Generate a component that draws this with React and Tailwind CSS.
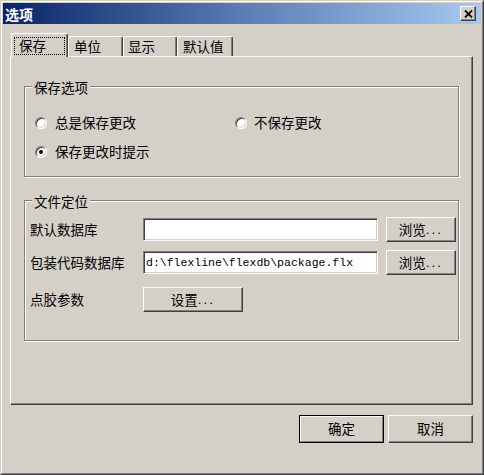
import React from "react";

const raised =
  "bg-[#d4d0c8] border border-t-white border-l-white border-r-[#404040] border-b-[#404040] shadow-[inset_-1px_-1px_0_#808080]";
const sunken =
  "bg-white border border-t-[#808080] border-l-[#808080] border-r-white border-b-white shadow-[inset_1px_1px_0_#404040,inset_-1px_-1px_0_#d4d0c8]";
const etched =
  "relative w-[435px] border border-[#808080] shadow-[inset_1px_1px_0_white,1px_1px_0_white]";

function Radio({ checked }) {
  return (
    <div className="w-[12px] h-[12px] shrink-0 rounded-full bg-white border border-t-[#808080] border-l-[#808080] border-r-white border-b-white shadow-[inset_1px_1px_0_#404040,inset_-1px_-1px_0_#d4d0c8] flex items-center justify-center">
      {checked && <div className="w-[4px] h-[4px] rounded-full bg-black" />}
    </div>
  );
}

function Dots() {
  return <span className="tracking-[2px] font-['Liberation_Sans',sans-serif]">...</span>;
}

function Legend({ children }) {
  return (
    <div className="absolute left-[7px] -top-[8px] px-[2px] bg-[#d4d0c8] leading-[16px]">
      {children}
    </div>
  );
}

export default function App() {
  return (
    <div className="w-[484px] h-[475px] bg-[#d4d0c8] border border-t-[#d4d0c8] border-l-[#d4d0c8] border-r-[#404040] border-b-[#404040] text-black text-[13.5px] font-['Noto_Sans_CJK_SC','Liberation_Sans',sans-serif]">
      <div className="h-full border border-t-white border-l-white border-r-[#808080] border-b-[#808080] p-[1px] flex flex-col">
        {/* Title bar */}
        <div className="h-[21px] shrink-0 flex items-center justify-between pl-[2px] pr-[5px] bg-linear-to-r from-[#0a246a] via-[#5a7db5] to-[#a6caf0]">
          <span className="text-white font-bold text-[14px] leading-none">选项</span>
          <div className={`w-[16px] h-[15px] flex items-center justify-center ${raised}`}>
            <svg width="9" height="8" viewBox="0 0 9 8">
              <path d="M1 0.5 L8 7.5 M8 0.5 L1 7.5" stroke="black" strokeWidth="1.8" />
            </svg>
          </div>
        </div>

        {/* Tabs + panel */}
        <div className="pl-[7px] pt-[9px]">
          <div className="relative z-10 flex items-end h-[23px]">
            <div className="ml-[1px] w-[57px] h-[24px] -mb-[1px] bg-[#d4d0c8] border-t border-l border-r border-t-white border-l-white border-r-[#404040] shadow-[inset_-1px_0_0_#808080] rounded-t-[3px] pl-[2px] pr-[2px] pt-[3px] pb-[2px] flex">
              <div className="flex-1 border border-dotted border-black flex items-center pl-[4px] leading-none">
                保存
              </div>
            </div>
            <div className="w-[55px] h-[20px] border-t border-l border-r border-t-white border-l-white border-r-[#404040] shadow-[inset_-1px_0_0_#808080] rounded-t-[3px] pl-[5px] pt-[1px] flex items-center leading-none">
              单位
            </div>
            <div className="w-[54px] h-[20px] border-t border-l border-r border-t-white border-l-white border-r-[#404040] shadow-[inset_-1px_0_0_#808080] rounded-t-[3px] pl-[4px] pt-[1px] flex items-center leading-none">
              显示
            </div>
            <div className="w-[56px] h-[20px] border-t border-l border-r border-t-white border-l-white border-r-[#404040] shadow-[inset_-1px_0_0_#808080] rounded-t-[3px] pl-[5px] pt-[1px] flex items-center leading-none">
              默认值
            </div>
          </div>

          <div className={`w-[463px] h-[349px] pl-[13px] pt-[29px] ${raised}`}>
            {/* 保存选项 */}
            <div className={`${etched} h-[91px] pt-[28px] pl-[10px]`}>
              <Legend>保存选项</Legend>
              <div className="grid grid-cols-[200px_1fr]">
                <div className="flex items-center h-[16px] gap-[8px]">
                  <Radio />
                  <span className="leading-none">总是保存更改</span>
                </div>
                <div className="flex items-center h-[16px] gap-[7px]">
                  <Radio />
                  <span className="leading-none">不保存更改</span>
                </div>
                <div className="flex items-center h-[16px] gap-[8px] mt-[13px]">
                  <Radio checked />
                  <span className="leading-none">保存更改时提示</span>
                </div>
              </div>
            </div>

            {/* 文件定位 */}
            <div className={`${etched} mt-[23px] h-[141px] pt-[16px] pl-[5px]`}>
              <Legend>文件定位</Legend>
              <div className="flex items-center h-[25px]">
                <span className="w-[113px] leading-none">默认数据库</span>
                <div className={`w-[235px] h-[23px] ${sunken}`} />
                <div className={`ml-[8px] w-[70px] h-[25px] flex items-center justify-center leading-none ${raised}`}>
                  浏览<Dots />
                </div>
              </div>
              <div className="flex items-center h-[25px] mt-[8px]">
                <span className="w-[113px] leading-none">包装代码数据库</span>
                <div className={`w-[235px] h-[23px] flex items-center pl-[2px] font-['Liberation_Mono',monospace] text-[11.5px] leading-none ${sunken}`}>
                  {"d:\\flexline\\flexdb\\package.flx"}
                </div>
                <div className={`ml-[8px] w-[70px] h-[25px] flex items-center justify-center leading-none ${raised}`}>
                  浏览<Dots />
                </div>
              </div>
              <div className="flex items-center h-[25px] mt-[12px]">
                <span className="w-[113px] leading-none">点胶参数</span>
                <div className={`w-[100px] h-[25px] flex items-center justify-center leading-none ${raised}`}>
                  设置<Dots />
                </div>
              </div>
            </div>
          </div>
        </div>

        {/* Bottom buttons */}
        <div className="flex justify-end gap-[4px] mt-[10px] pr-[8px]">
          <div className="w-[85px] h-[28px] border border-black flex">
            <div className="flex-1 flex items-center justify-center leading-none bg-[#d4d0c8] border border-t-white border-l-white border-r-[#808080] border-b-[#808080]">
              确定
            </div>
          </div>
          <div className={`w-[85px] h-[28px] flex items-center justify-center leading-none ${raised}`}>
            取消
          </div>
        </div>
      </div>
    </div>
  );
}
